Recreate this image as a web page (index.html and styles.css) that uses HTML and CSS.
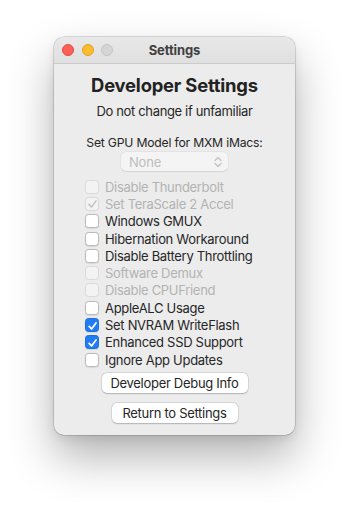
FILE: index.html
```html
<!DOCTYPE html>
<html>
<head>
<meta charset="utf-8">
<link rel="stylesheet" href="styles.css">
</head>
<body>
<div class="window">
  <div class="titlebar">
    <div class="lights">
      <span class="light red"></span>
      <span class="light yellow"></span>
      <span class="light gray"></span>
    </div>
    <div class="wtitle">Settings</div>
  </div>
  <div class="content">
    <div class="heading">Developer Settings</div>
    <div class="subtitle">Do not change if unfamiliar</div>
    <div class="label">Set GPU Model for MXM iMacs:</div>
    <div class="popup">
      <span class="popup-text">None</span>
      <svg class="chev" width="8" height="12" viewBox="0 0 8 12"><path d="M1 4.5 L4 1.5 L7 4.5 M1 7.5 L4 10.5 L7 7.5" fill="none" stroke="#c4c4c4" stroke-width="1.4" stroke-linecap="round" stroke-linejoin="round"/></svg>
    </div>
    <div class="checks">
      <div class="row disabled"><span class="box"></span><span>Disable Thunderbolt</span></div>
      <div class="row disabled"><span class="box"><svg width="14" height="14" viewBox="0 0 14 14"><path d="M3.2 7.4 L5.9 10.3 L10.8 3.6" fill="none" stroke="#c2c2c2" stroke-width="1.6" stroke-linecap="round" stroke-linejoin="round"/></svg></span><span>Set TeraScale 2 Accel</span></div>
      <div class="row"><span class="box"></span><span>Windows GMUX</span></div>
      <div class="row"><span class="box"></span><span>Hibernation Workaround</span></div>
      <div class="row"><span class="box"></span><span>Disable Battery Throttling</span></div>
      <div class="row disabled"><span class="box"></span><span>Software Demux</span></div>
      <div class="row disabled"><span class="box"></span><span>Disable CPUFriend</span></div>
      <div class="row"><span class="box"></span><span>AppleALC Usage</span></div>
      <div class="row"><span class="box checked"><svg width="14" height="14" viewBox="0 0 14 14"><path d="M3.4 7.4 L6 10.2 L10.8 3.8" fill="none" stroke="#fff" stroke-width="1.9" stroke-linecap="round" stroke-linejoin="round"/></svg></span><span>Set NVRAM WriteFlash</span></div>
      <div class="row"><span class="box checked"><svg width="14" height="14" viewBox="0 0 14 14"><path d="M3.4 7.4 L6 10.2 L10.8 3.8" fill="none" stroke="#fff" stroke-width="1.9" stroke-linecap="round" stroke-linejoin="round"/></svg></span><span>Enhanced SSD Support</span></div>
      <div class="row"><span class="box"></span><span>Ignore App Updates</span></div>
    </div>
    <div class="buttons">
      <div class="btn btn-debug">Developer Debug Info</div>
      <div class="btn btn-return">Return to Settings</div>
    </div>
  </div>
</div>
</body>
</html>
```
FILE: styles.css
```css
html, body {
  margin: 0;
  padding: 0;
  background: #ffffff;
}
body {
  font-family: Inter, "Liberation Sans", sans-serif;
  color: #262626;
  -webkit-font-smoothing: antialiased;
  min-height: 507px;
  padding-top: 37px;
  padding-bottom: 72px;
  box-sizing: border-box;
}
.window {
  margin: 0 0 0 54px;
  width: 241px;
  height: 398px;
  box-sizing: border-box;
  border-radius: 10px;
  background: #ececec;
  box-shadow: 0 0 0 0.5px rgba(0,0,0,0.25), 0 22px 45px rgba(0,0,0,0.3), 0 4px 10px rgba(0,0,0,0.08);
  overflow: hidden;
  display: flex;
  flex-direction: column;
}
.titlebar {
  height: 26px;
  flex: none;
  background: linear-gradient(#e8e8e8, #e0e0e0);
  border-bottom: 1px solid #cbcbcb;
  position: relative;
  display: flex;
  align-items: center;
  justify-content: center;
}
.lights {
  position: absolute;
  left: 8px;
  top: 7px;
  display: flex;
  gap: 7.5px;
}
.light {
  width: 12px;
  height: 12px;
  border-radius: 50%;
  box-sizing: border-box;
}
.red { background: #fe5f57; border: 0.5px solid #e2463f; }
.yellow { background: #febc2e; border: 0.5px solid #dea123; }
.gray { background: #d5d5d5; border: 0.5px solid #c4c4c4; }
.wtitle {
  font-size: 13px;
  font-weight: 700;
  color: #3f3f3f;
  letter-spacing: -0.1px;
}
.content {
  display: flex;
  flex-direction: column;
  align-items: center;
  padding-top: 10px;
}
.heading {
  font-size: 18.4px;
  font-weight: 700;
  line-height: 22px;
  color: #222;
  letter-spacing: -0.2px;
}
.subtitle {
  margin-top: 7px;
  font-size: 13px;
  line-height: 16px;
  letter-spacing: -0.35px;
}
.label {
  margin-top: 16px;
  font-size: 12.2px;
  line-height: 16px;
  letter-spacing: -0.2px;
}
.popup {
  margin-top: 1px;
  width: 107px;
  height: 19px;
  box-sizing: border-box;
  border-radius: 5px;
  background: #f4f4f4;
  box-shadow: 0 0 0 0.5px rgba(0,0,0,0.06), 0 0.5px 1px rgba(0,0,0,0.08);
  display: flex;
  align-items: center;
  justify-content: space-between;
  padding: 0 6px 0 8px;
}
.popup-text {
  font-size: 13px;
  color: #bdbdbd;
  letter-spacing: -0.2px;
}
.checks {
  align-self: stretch;
  margin-top: 7px;
  padding-left: 31px;
  display: flex;
  flex-direction: column;
}
.row {
  height: 17.3px;
  display: flex;
  align-items: center;
  gap: 6px;
  font-size: 13px;
  letter-spacing: -0.3px;
}
.box {
  width: 14px;
  height: 14px;
  box-sizing: border-box;
  border-radius: 3.5px;
  background: #ffffff;
  border: 0.5px solid #b9b9b9;
  box-shadow: 0 0.5px 1px rgba(0,0,0,0.08);
  display: flex;
  flex: none;
}
.box svg { margin: -0.5px; }
.box.checked {
  background: #1f7cf4;
  border-color: #1d6fdc;
}
.row.disabled { color: #b3b3b3; }
.row.disabled .box {
  background: #f3f3f3;
  border-color: #d9d9d9;
  box-shadow: none;
}
.buttons {
  margin-top: 5px;
  display: flex;
  flex-direction: column;
  align-items: center;
  gap: 10px;
}
.btn {
  height: 20px;
  box-sizing: border-box;
  background: #ffffff;
  border-radius: 5px;
  box-shadow: 0 0 0 0.5px rgba(0,0,0,0.12), 0 0.5px 1.5px rgba(0,0,0,0.2);
  font-size: 13px;
  line-height: 20px;
  letter-spacing: -0.3px;
  text-align: center;
  color: #262626;
}
.btn-debug { width: 146px; }
.btn-return { width: 126px; }
```
